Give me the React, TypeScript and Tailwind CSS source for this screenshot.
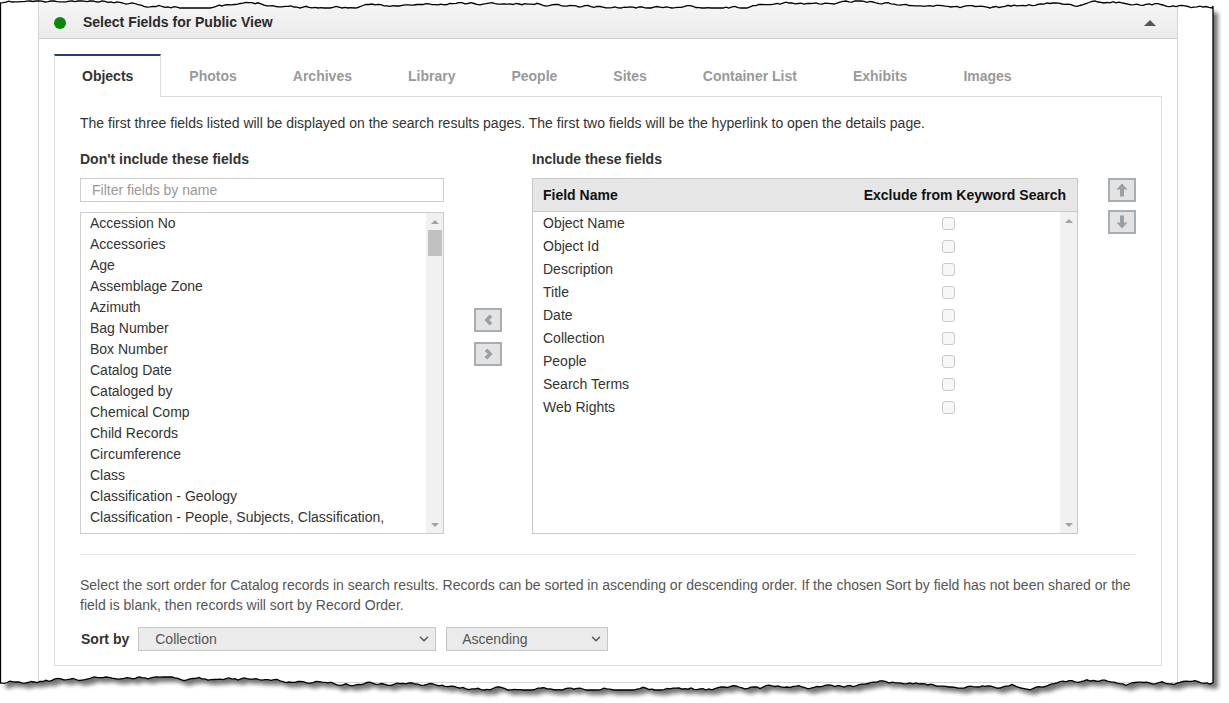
import { ChevronDown } from "lucide-react";

const tabs = ["Objects", "Photos", "Archives", "Library", "People", "Sites", "Container List", "Exhibits", "Images"];

const excludedFields = [
  "Accession No",
  "Accessories",
  "Age",
  "Assemblage Zone",
  "Azimuth",
  "Bag Number",
  "Box Number",
  "Catalog Date",
  "Cataloged by",
  "Chemical Comp",
  "Child Records",
  "Circumference",
  "Class",
  "Classification - Geology",
  "Classification - People, Subjects, Classification,",
];

const includedFields = [
  "Object Name",
  "Object Id",
  "Description",
  "Title",
  "Date",
  "Collection",
  "People",
  "Search Terms",
  "Web Rights",
];

function FakeScrollbar({ thumb }: { thumb?: boolean }) {
  return (
    <div className="flex w-[17px] shrink-0 flex-col items-center bg-[#f1f1f1]">
      <div className="flex h-[17px] w-full items-center justify-center">
        <span className="h-0 w-0 border-x-[4px] border-b-[4px] border-x-transparent border-b-[#a3a3a3]" />
      </div>
      {thumb && <div className="h-[26px] w-[14px] bg-[#c1c1c1]" />}
      <div className="flex-1" />
      <div className="flex h-[17px] w-full items-center justify-center">
        <span className="h-0 w-0 border-x-[4px] border-t-[4px] border-x-transparent border-t-[#a3a3a3]" />
      </div>
    </div>
  );
}

function MoveButton({ children }: { children: React.ReactNode }) {
  return (
    <button className="flex h-[24px] w-[28px] items-center justify-center border-2 border-[#a7aeb4] bg-[#e3e3e3] text-[#97a0a8]">
      {children}
    </button>
  );
}

// glyphicon-style arrows: thick chevron and block arrow
function ChevronGlyph({ right }: { right?: boolean }) {
  return (
    <svg width="9" height="12" viewBox="0 0 9 12" className={right ? "rotate-180" : ""}>
      <path d="M5.5 0.5 L8.5 3 L5 6 L8.5 9 L5.5 11.5 L0.5 6 Z" fill="currentColor" />
    </svg>
  );
}

function ArrowGlyph({ down }: { down?: boolean }) {
  return (
    <svg width="12" height="14" viewBox="0 0 12 14" className={down ? "rotate-180" : ""}>
      <path d="M6 0.5 L11.5 6.5 H8 V13.5 H4 V6.5 H0.5 Z" fill="currentColor" />
    </svg>
  );
}

function TornEdge() {
  const R = 1213;
  let seed = 11;
  const rand = () => {
    seed = (seed * 16807) % 2147483647;
    return seed / 2147483647;
  };
  const top: [number, number][] = [];
  let y = 4;
  for (let x = 0; x < R; x += 3) {
    y += (rand() - 0.5) * 2.4;
    y = Math.max(1, Math.min(8, y));
    top.push([x, y]);
  }
  top.push([R, 6]);
  const bottom: [number, number][] = [];
  y = 684;
  for (let x = R; x > 0; x -= 3) {
    y += (rand() - 0.5) * 3;
    y = Math.max(677, Math.min(690, y));
    bottom.push([x, y]);
  }
  bottom.push([0.5, 683]);

  const paper =
    `M0.5 ${top[0][1].toFixed(1)} ` +
    top.map(([px, py]) => `L${px.toFixed(1)} ${py.toFixed(1)}`).join(" ") +
    " " +
    bottom.map(([px, py]) => `L${px.toFixed(1)} ${py.toFixed(1)}`).join(" ") +
    " Z";
  const outside = `M0 0H1229V703H0Z ${paper}`;

  return (
    <svg className="pointer-events-none absolute inset-0" width="1229" height="703" viewBox="0 0 1229 703">
      <defs>
        <clipPath id="outside">
          <path d={outside} clipRule="evenodd" />
        </clipPath>
        <filter id="blur" x="-5%" y="-5%" width="110%" height="110%">
          <feGaussianBlur stdDeviation="2" />
        </filter>
      </defs>
      <path d={outside} fill="#fff" fillRule="evenodd" />
      <g clipPath="url(#outside)">
        <path d={paper} transform="translate(5 5)" fill="#000" opacity="0.55" filter="url(#blur)" />
      </g>
      <path d={paper} fill="none" stroke="#000" strokeWidth="1.3" />
    </svg>
  );
}

export default function App() {
  return (
    <div className="relative h-[703px] w-[1229px] overflow-hidden bg-white font-['Liberation_Sans',Arial,sans-serif] text-[14px] text-[#333]">
      <div className="ml-[38px] w-[1140px] border border-[#d5d5d5] bg-white">
        <div className="flex h-[38px] items-center border-b border-[#cfcfcf] bg-gradient-to-b from-[#f6f6f6] to-[#ebebeb] pl-[15px] pr-[21px] pt-[6px]">
          <span className="h-[12px] w-[12px] rounded-full bg-[#0b870b]" />
          <span className="ml-[17px] font-bold text-[#2a2a2a]">Select Fields for Public View</span>
          <span className="ml-auto h-0 w-0 border-x-[6px] border-b-[6px] border-x-transparent border-b-[#555]" />
        </div>

        <div className="px-[15px] pb-[16px] pt-[15px]">
          <div className="flex h-[42px]">
            {tabs.map((tab, i) => (
              <div
                key={tab}
                className={
                  i === 0
                    ? "relative z-10 -mb-px flex h-[43px] items-center border-x border-t-2 border-x-[#ddd] border-t-[#2e3a6c] bg-white px-[27px] pb-px font-bold text-[#333]"
                    : "flex h-[42px] items-center border-x border-t-2 border-transparent px-[27px] font-bold text-[#999]"
                }
              >
                {tab}
              </div>
            ))}
          </div>

          <div className="border border-[#ddd] px-[25px] pb-[14px] pt-[16px]">
            <p className="leading-[20px]">
              The first three fields listed will be displayed on the search results pages. The first two fields will be the hyperlink to open the details page.
            </p>

            <div className="mt-[16px] flex items-start gap-[30px]">
              <div className="w-[364px]">
                <div className="font-bold leading-[20px]">Don't include these fields</div>
                <input
                  placeholder="Filter fields by name"
                  className="mt-[9px] h-[24px] w-full border border-[#ccc] px-[11px] text-[14px] outline-none placeholder:text-[#999]"
                />
                <div className="mt-[10px] flex h-[322px] border border-[#ccc]">
                  <ul className="flex-1 overflow-hidden pl-[9px]">
                    {excludedFields.map((f) => (
                      <li key={f} className="h-[21px] whitespace-nowrap leading-[21px]">
                        {f}
                      </li>
                    ))}
                  </ul>
                  <FakeScrollbar thumb />
                </div>
              </div>

              <div className="mt-[159px] flex flex-col gap-[10px]">
                <MoveButton>
                  <ChevronGlyph />
                </MoveButton>
                <MoveButton>
                  <ChevronGlyph right />
                </MoveButton>
              </div>

              <div className="w-[546px]">
                <div className="font-bold leading-[20px]">Include these fields</div>
                <div className="mt-[9px] flex h-[356px] flex-col border border-[#c8c8c8]">
                  <div className="flex h-[33px] shrink-0 items-center justify-between border-b border-[#c8c8c8] bg-[#e6e6e6] pl-[10px] pr-[11px] font-bold text-[#111]">
                    <span>Field Name</span>
                    <span>Exclude from Keyword Search</span>
                  </div>
                  <div className="flex flex-1">
                    <div className="flex-1">
                      {includedFields.map((f) => (
                        <div key={f} className="flex h-[23px] items-center pl-[10px]">
                          <span className="flex-1">{f}</span>
                          <span className="flex w-[224px] justify-center">
                            <span className="h-[13px] w-[13px] rounded-[3px] border border-[#cacaca] bg-[#f7f7f7]" />
                          </span>
                        </div>
                      ))}
                    </div>
                    <FakeScrollbar />
                  </div>
                </div>
              </div>

              <div className="mt-[29px] flex flex-col gap-[8px]">
                <MoveButton>
                  <ArrowGlyph />
                </MoveButton>
                <MoveButton>
                  <ArrowGlyph down />
                </MoveButton>
              </div>
            </div>

            <div className="mt-[20px] border-t border-[#e5e5e5]" />

            <p className="mt-[21px] leading-[19.5px] text-[#555]">
              Select the sort order for Catalog records in search results. Records can be sorted in ascending or descending order. If the chosen Sort by field has not been shared or the field is blank, then records will sort by Record Order.
            </p>

            <div className="mt-[12px] flex items-center">
              <span className="ml-px font-bold text-[#333]">Sort by</span>
              <div className="ml-[9px] flex h-[24px] w-[298px] items-center justify-between border border-[#c6c6c6] bg-[#ebebeb] pl-[16px] pr-[4px] text-[#555]">
                <span>Collection</span>
                <ChevronDown size={14} strokeWidth={2.5} className="text-[#555]" />
              </div>
              <div className="ml-[10px] flex h-[24px] w-[162px] items-center justify-between border border-[#c6c6c6] bg-[#ebebeb] pl-[15px] pr-[4px] text-[#555]">
                <span>Ascending</span>
                <ChevronDown size={14} strokeWidth={2.5} className="text-[#555]" />
              </div>
            </div>
          </div>
        </div>
      </div>
      <TornEdge />
    </div>
  );
}
